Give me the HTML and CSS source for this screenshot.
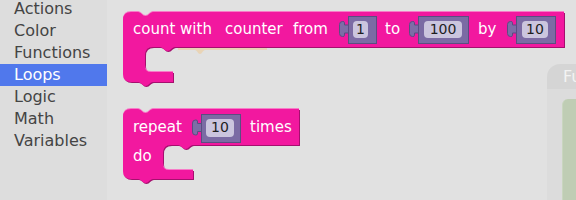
FILE: index.html
```html
<!DOCTYPE html>
<html>
<head>
<meta charset="utf-8">
<link rel="stylesheet" href="styles.css">
</head>
<body>
<div class="app">
  <nav class="toolbox">
    <ul class="cats">
      <li class="cat">Actions</li>
      <li class="cat">Color</li>
      <li class="cat">Functions</li>
      <li class="cat selected">Loops</li>
      <li class="cat">Logic</li>
      <li class="cat">Math</li>
      <li class="cat">Variables</li>
    </ul>
  </nav>
  <main class="workspace">
    <svg class="canvas" width="469" height="200" viewBox="107 0 469 200" xmlns="http://www.w3.org/2000/svg">
      <defs>
        <path id="b1" d="M123,20 Q123,12 131,12 H138 c3,0 4.5,4 7.5,4 s4.5,-4 7.5,-4 H564 V47 H175 c-3,0 -4.5,4 -7.5,4 s-4.5,-4 -7.5,-4 H153 Q145,47 145,55 V66 Q145,72 151,72 H173 V82 H153 c-3,0 -4.5,4 -7.5,4 s-4.5,-4 -7.5,-4 H131 Q123,82 123,74 Z"/>
        <path id="b2" d="M123,117 Q123,109 131,109 H138 c3,0 4.5,4 7.5,4 s4.5,-4 7.5,-4 H299 V145 H193 c-3,0 -4.5,4 -7.5,4 s-4.5,-4 -7.5,-4 H171 Q163,145 163,153 V164 Q163,170 169,170 H193 V179 H153 c-3,0 -4.5,4 -7.5,4 s-4.5,-4 -7.5,-4 H131 Q123,179 123,171 Z"/>
        <path id="tab" d="M0,3.5 H-4 V1 Q-4,0 -6,0 Q-9,0 -9,3 V12 Q-9,15 -6,15 Q-4,15 -4,14 V11.5 H0 Z"/>
      </defs>

      <!-- ghost block peeking under the first block -->
      <path class="ghost" d="M178,44 H267 V50 H205 c-2,0 -3,4 -5,4 s-3,-4 -5,-4 H178 Z"/>

      <!-- count with block -->
      <use href="#b1" class="blk-dark" transform="translate(1,1)"/>
      <use href="#b1" class="blk-light" transform="translate(0,-1)"/>
      <use href="#b1" class="blk"/>
      <text class="lbl" x="133" y="34">count with</text>
      <text class="lbl" x="225" y="34">counter</text>
      <text class="lbl" x="293" y="34">from</text>
      <text class="lbl" x="385" y="34">to</text>
      <text class="lbl" x="478" y="34">by</text>

      <g class="inp">
        <use href="#tab" class="tab" transform="translate(348.5,21.5)"/>
        <rect class="box" x="348.5" y="16.5" width="28" height="27"/>
        <rect class="field" x="353" y="21" width="15" height="17" rx="4"/>
        <text class="num" x="360.5" y="34">1</text>
      </g>
      <g class="inp">
        <use href="#tab" class="tab" transform="translate(418.5,21.5)"/>
        <rect class="box" x="418.5" y="16.5" width="50" height="27"/>
        <rect class="field" x="424" y="21" width="38" height="17" rx="4"/>
        <text class="num" x="443" y="34">100</text>
      </g>
      <g class="inp">
        <use href="#tab" class="tab" transform="translate(516.5,21.5)"/>
        <rect class="box" x="516.5" y="16.5" width="39" height="27"/>
        <rect class="field" x="522" y="21" width="26" height="17" rx="4"/>
        <text class="num" x="535" y="34">10</text>
      </g>

      <!-- repeat block -->
      <use href="#b2" class="blk-dark" transform="translate(1,1)"/>
      <use href="#b2" class="blk-light" transform="translate(0,-1)"/>
      <use href="#b2" class="blk"/>
      <text class="lbl" x="133" y="132">repeat</text>
      <text class="lbl" x="250" y="132">times</text>
      <text class="lbl" x="133" y="161">do</text>
      <g class="inp">
        <use href="#tab" class="tab" transform="translate(201.5,120)"/>
        <rect class="box" x="201.5" y="114.5" width="39" height="28"/>
        <rect class="field" x="206" y="119" width="28" height="18" rx="4"/>
        <text class="num" x="220" y="132">10</text>
      </g>
    </svg>

    <div class="flyout">
      <div class="flyout-head">Functions</div>
      <div class="flyout-body">
        <div class="flyout-block"></div>
      </div>
    </div>
  </main>
</div>
</body>
</html>
```

FILE: styles.css
```css
html, body {
  margin: 0;
  padding: 0;
}
body {
  width: 576px;
  height: 200px;
  overflow: hidden;
  font-family: "DejaVu Sans", "Liberation Sans", sans-serif;
}
.app {
  display: flex;
  width: 576px;
  height: 200px;
  overflow: hidden;
}
.toolbox {
  width: 107px;
  flex: 0 0 107px;
  background: #dddddd;
}
.cats {
  list-style: none;
  margin: -2px 0 0 0;
  padding: 0;
}
.cat {
  height: 22px;
  line-height: 22px;
  padding-left: 14px;
  font-size: 16px;
  color: #444444;
  white-space: nowrap;
}
.cat.selected {
  background: #5078ec;
  color: #ffffff;
}
.workspace {
  flex: 1 1 auto;
  position: relative;
  background: #e1e1e1;
  overflow: hidden;
}
.canvas {
  display: block;
}
.ghost {
  fill: #e9d4b6;
}
.blk {
  fill: #f2189f;
}
.blk-dark {
  fill: #a50f6e;
}
.blk-light {
  fill: #f77cc8;
}
.lbl {
  font-family: "DejaVu Sans", sans-serif;
  font-size: 15px;
  fill: #ffffff;
}
.tab {
  fill: #7d6da6;
  stroke: #5a4d82;
  stroke-width: 1;
}
.box {
  fill: #7b6ba4;
  stroke: #5a4d82;
  stroke-width: 1;
}
.field {
  fill: #cbc5de;
}
.num {
  font-family: "DejaVu Sans", sans-serif;
  font-size: 14px;
  fill: #1e1e1e;
  text-anchor: middle;
}
.flyout {
  position: absolute;
  left: 440px;
  top: 64px;
  width: 120px;
  height: 150px;
  display: flex;
  flex-direction: column;
}
.flyout-head {
  height: 25px;
  line-height: 25px;
  background: #d5d5d5;
  border-top-left-radius: 13px;
  padding-left: 16px;
  font-size: 16px;
  color: #f3f3f3;
  white-space: nowrap;
}
.flyout-body {
  flex: 1 1 auto;
  background: #dcdcdc;
  padding: 10px 0 0 15px;
}
.flyout-block {
  height: 120px;
  background: #bfcdb4;
  border-left: 1px solid #c9d6bf;
  border-top-left-radius: 6px;
}
```
